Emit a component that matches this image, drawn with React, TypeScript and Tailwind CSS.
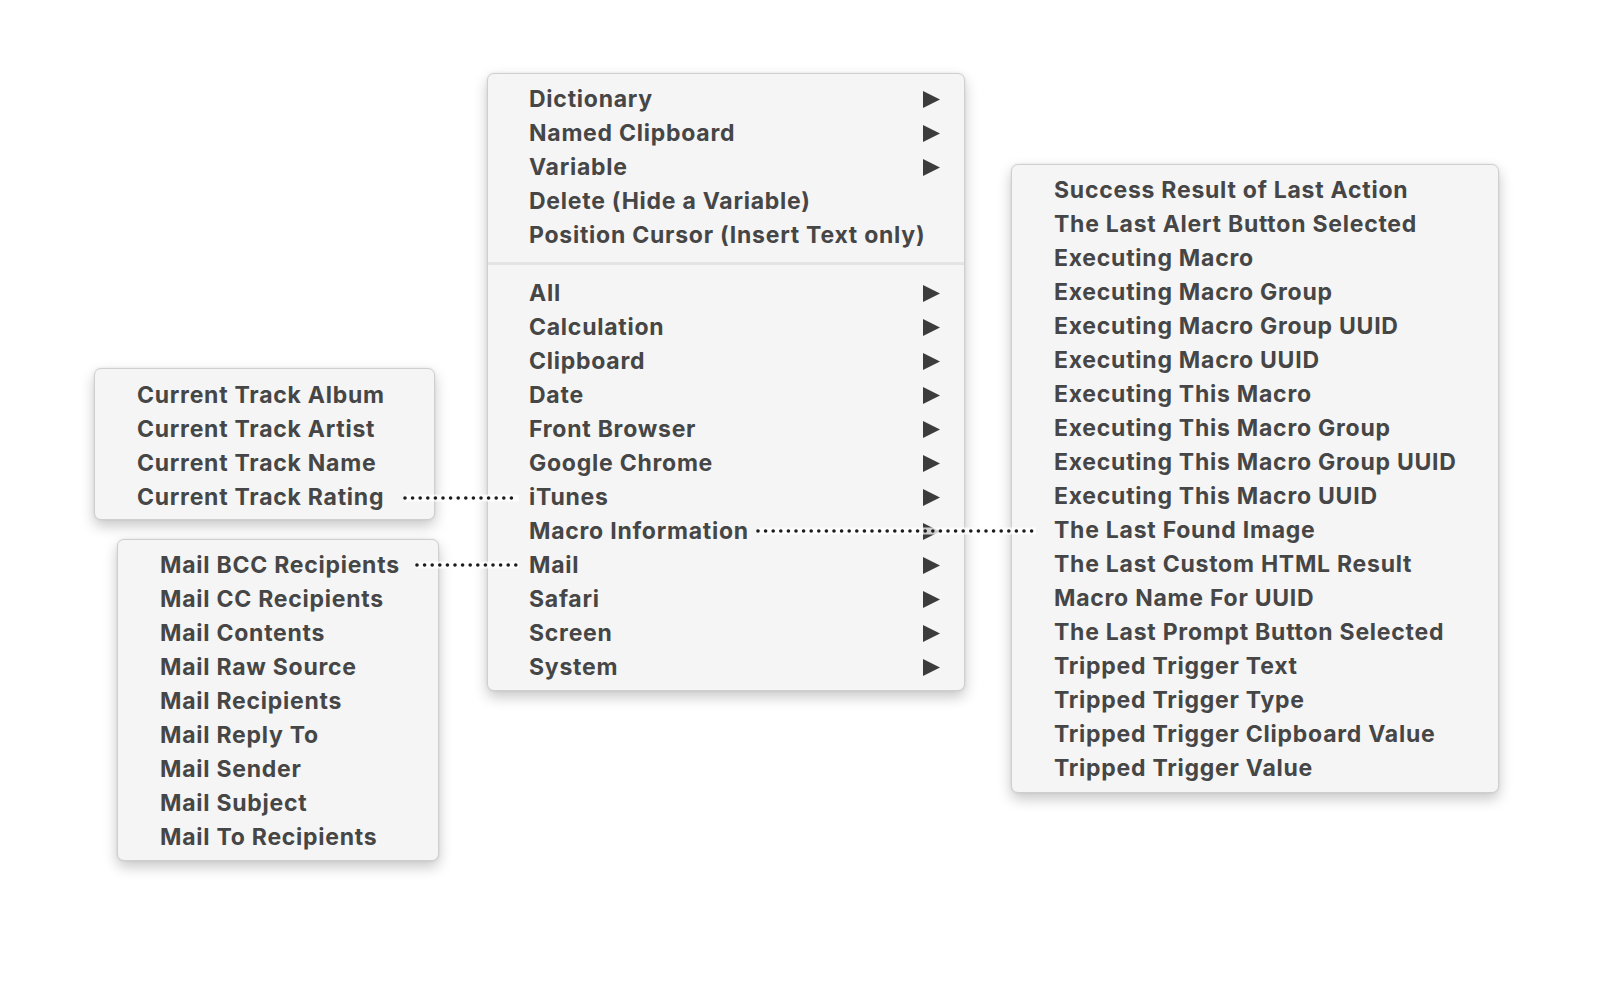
import React from 'react';

type Item = { label: string; sub?: boolean };

const mainTop: Item[] = [
    { label: 'Dictionary', sub: true },
    { label: 'Named Clipboard', sub: true },
    { label: 'Variable', sub: true },
    { label: 'Delete (Hide a Variable)' },
    { label: 'Position Cursor (Insert Text only)' },
];

const mainBottom: Item[] = [
    'All',
    'Calculation',
    'Clipboard',
    'Date',
    'Front Browser',
    'Google Chrome',
    'iTunes',
    'Macro Information',
    'Mail',
    'Safari',
    'Screen',
    'System',
].map((label) => ({ label, sub: true }));

const itunesItems = ['Current Track Album', 'Current Track Artist', 'Current Track Name', 'Current Track Rating'];

const mailItems = [
    'Mail BCC Recipients',
    'Mail CC Recipients',
    'Mail Contents',
    'Mail Raw Source',
    'Mail Recipients',
    'Mail Reply To',
    'Mail Sender',
    'Mail Subject',
    'Mail To Recipients',
];

const macroItems = [
    'Success Result of Last Action',
    'The Last Alert Button Selected',
    'Executing Macro',
    'Executing Macro Group',
    'Executing Macro Group UUID',
    'Executing Macro UUID',
    'Executing This Macro',
    'Executing This Macro Group',
    'Executing This Macro Group UUID',
    'Executing This Macro UUID',
    'The Last Found Image',
    'The Last Custom HTML Result',
    'Macro Name For UUID',
    'The Last Prompt Button Selected',
    'Tripped Trigger Text',
    'Tripped Trigger Type',
    'Tripped Trigger Clipboard Value',
    'Tripped Trigger Value',
];

const Arrow: React.FC = () => (
    <svg width="17" height="17" viewBox="0 0 17 17" className="shrink-0">
        <path d="M0 0 L17 8.5 L0 17 Z" fill="#3c3c3c" />
    </svg>
);

const Row: React.FC<{ item: Item }> = ({ item }) => (
    <div className="h-[34px] flex items-center justify-between">
        <span className="whitespace-nowrap">{item.label}</span>
        {item.sub && <Arrow />}
    </div>
);

const menuBox =
    'absolute bg-[#f5f5f5] border border-[#cfcfcf] rounded-[7px] shadow-[0_6px_14px_rgba(0,0,0,0.22),0_0_3px_rgba(0,0,0,0.08)] text-[#464646] text-[23px] font-bold tracking-[0.75px] leading-none';

// dotted connector, drawn over the menus
const Dots: React.FC<{ x1: number; x2: number; y: number }> = ({ x1, x2, y }) => (
    <g>
        <line x1={x1} y1={y} x2={x2} y2={y} stroke="white" strokeOpacity="0.75" strokeWidth="7" />
        <line
            x1={x1}
            y1={y}
            x2={x2}
            y2={y}
            stroke="#1c1c1c"
            strokeWidth="3.6"
            strokeLinecap="round"
            strokeDasharray="0 7.6"
        />
    </g>
);

const App: React.FC = () => {
    return (
        <div
            className="relative w-[1606px] h-[994px] bg-white overflow-hidden"
            style={{ fontFamily: 'Inter, "Noto Sans", "Liberation Sans", sans-serif' }}
        >
            {/* iTunes submenu */}
            <div className={`${menuBox} left-[94px] top-[368px] w-[341px] h-[152px] pt-[9px] pl-[42px]`}>
                {itunesItems.map((l) => (
                    <Row key={l} item={{ label: l }} />
                ))}
            </div>

            {/* Mail submenu */}
            <div className={`${menuBox} left-[117px] top-[539px] w-[322px] h-[322px] pt-[8px] pl-[42px]`}>
                {mailItems.map((l) => (
                    <Row key={l} item={{ label: l }} />
                ))}
            </div>

            {/* main menu */}
            <div className={`${menuBox} left-[487px] top-[73px] w-[478px] h-[618px] pt-[8px]`}>
                <div className="pl-[41px] pr-[24px]">
                    {mainTop.map((it) => (
                        <Row key={it.label} item={it} />
                    ))}
                </div>
                <div className="mt-[10px] mb-[11px] h-[3px] bg-[#e4e4e4]" />
                <div className="pl-[41px] pr-[24px]">
                    {mainBottom.map((it) => (
                        <Row key={it.label} item={it} />
                    ))}
                </div>
            </div>

            {/* Macro Information submenu */}
            <div className={`${menuBox} left-[1011px] top-[164px] w-[488px] h-[629px] pt-[8px] pl-[42px]`}>
                {macroItems.map((l) => (
                    <Row key={l} item={{ label: l }} />
                ))}
            </div>

            <svg className="absolute inset-0 pointer-events-none" width="1606" height="994">
                <Dots x1={405} x2={519} y={498} />
                <Dots x1={417} x2={519} y={565} />
                <Dots x1={758} x2={1036} y={531} />
            </svg>
        </div>
    );
};

export default App;
